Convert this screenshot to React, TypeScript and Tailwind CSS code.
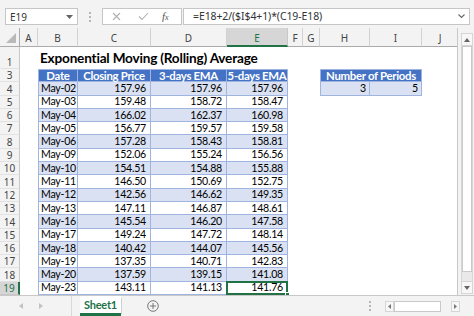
import React from 'react';

const data: [string, string, string, string][] = [
  ['May-02', '157.96', '157.96', '157.96'],
  ['May-03', '159.48', '158.72', '158.47'],
  ['May-04', '166.02', '162.37', '160.98'],
  ['May-05', '156.77', '159.57', '159.58'],
  ['May-06', '157.28', '158.43', '158.81'],
  ['May-09', '152.06', '155.24', '156.56'],
  ['May-10', '154.51', '154.88', '155.88'],
  ['May-11', '146.50', '150.69', '152.75'],
  ['May-12', '142.56', '146.62', '149.35'],
  ['May-13', '147.11', '146.87', '148.61'],
  ['May-16', '145.54', '146.20', '147.58'],
  ['May-17', '149.24', '147.72', '148.14'],
  ['May-18', '140.42', '144.07', '145.56'],
  ['May-19', '137.35', '140.71', '142.83'],
  ['May-20', '137.59', '139.15', '141.08'],
  ['May-23', '143.11', '141.13', '141.76'],
];

const letters = ['A', 'B', 'C', 'D', 'E', 'F', 'G', 'H', 'I', 'J'];

const rowHdr =
  "flex items-end justify-center pb-[1px] bg-[#f3f3f3] border-r border-[#c8c8c8] border-b border-b-[#e2e2e2] text-[10px] leading-none text-[#444] font-['Noto_Sans',sans-serif]";
const rowHdrSel =
  "flex items-end justify-center pb-[1px] bg-[#d6d6d6] border-r-2 border-[#217346] border-b border-b-[#c8c8c8] text-[10px] leading-none text-[#217346] font-['Noto_Sans',sans-serif]";
const tcell = 'border-r border-b border-[#9fb5df] flex items-end leading-none pb-[1px] whitespace-nowrap';
const hcell = 'border-r border-b border-t border-[#9fb5df] flex items-center justify-center whitespace-nowrap bg-[#4472c4] text-white font-bold text-[11.4px] leading-[12px] tracking-[-0.3px]';
const numText = 'text-[10.6px] tracking-[-0.25px]';

function Empty() {
  return <div />;
}

export default function App() {
  return (
    <div className="w-[474px] h-[316px] overflow-hidden bg-[#f3f3f3] flex flex-col font-['Lato',sans-serif] text-black">
      {/* formula bar */}
      <div className="h-[28px] shrink-0 flex items-start pt-[8px] pl-[5px] pr-[4px]">
        <div className="w-[73px] h-[17px] bg-white border border-[#c6c6c6] flex items-center justify-between pl-[4px] pr-[4px]">
          <span className="text-[10px] text-[#333] font-['Noto_Sans',sans-serif] leading-none">E19</span>
          <svg width="7" height="4" viewBox="0 0 7 4">
            <path d="M0 0 L7 0 L3.5 4 Z" fill="#666" />
          </svg>
        </div>
        <div className="w-[24px] h-[17px] flex flex-col items-center justify-center gap-[2px]">
          <div className="w-[2px] h-[2px] bg-[#b5b5b5]" />
          <div className="w-[2px] h-[2px] bg-[#b5b5b5]" />
          <div className="w-[2px] h-[2px] bg-[#b5b5b5]" />
        </div>
        <div className="w-[80px] h-[17px] bg-white border border-[#c6c6c6] flex items-center">
          <svg className="ml-[9px]" width="9" height="9" viewBox="0 0 9 9">
            <path d="M1 1 L8 8 M8 1 L1 8" stroke="#b0b0b0" strokeWidth="1.1" />
          </svg>
          <svg className="ml-[17px]" width="11" height="9" viewBox="0 0 11 9">
            <path d="M1 4.5 L4 7.5 L10 1" stroke="#b0b0b0" strokeWidth="1.1" fill="none" />
          </svg>
          <span className="ml-[13px] text-[11px] italic text-[#555] font-['Liberation_Serif',serif] leading-none">
            f<span className="text-[8px]">x</span>
          </span>
        </div>
        <div className="ml-[1px] flex-1 h-[17px] bg-white border border-[#c6c6c6] flex items-center justify-between pl-[9px] pr-[4px]">
          <span className="text-[10.5px] text-[#333] font-['Noto_Sans',sans-serif] leading-none tracking-[-0.1px]">
            =E18+2/($I$4+1)*(C19-E18)
          </span>
          <svg width="7" height="5" viewBox="0 0 7 5">
            <path d="M0.5 0.5 L3.5 3.5 L6.5 0.5" stroke="#666" strokeWidth="1.1" fill="none" />
          </svg>
        </div>
      </div>

      {/* sheet area */}
      <div className="flex h-[267px] shrink-0">
        <div className="w-[458px] bg-white border-r border-[#c8c8c8] grid grid-cols-[20px_18px_40px_73px_76px_61px_15px_17px_50px_52px_37px] grid-rows-[19px_22px_repeat(17,13.3px)] overflow-hidden">
          {/* header row */}
          <div className="bg-[#f3f3f3] border-r border-b border-[#ababab] relative">
            <svg className="absolute right-[3px] bottom-[3px]" width="10" height="10" viewBox="0 0 10 10">
              <path d="M10 0 L10 10 L0 10 Z" fill="#b9b9b9" />
            </svg>
          </div>
          {letters.map((l) =>
            l === 'E' ? (
              <div
                key={l}
                className="bg-[#d6d6d6] border-r border-[#c8c8c8] border-b-2 border-b-[#217346] flex items-end justify-center pb-[2px] text-[10px] leading-none text-[#217346] font-['Noto_Sans',sans-serif]"
              >
                {l}
              </div>
            ) : (
              <div
                key={l}
                className="bg-[#f3f3f3] border-r border-[#d2d2d2] border-b border-b-[#ababab] flex items-end justify-center pb-[3px] text-[10px] leading-none text-[#444] font-['Noto_Sans',sans-serif]"
              >
                {l}
              </div>
            )
          )}

          {/* row 1 */}
          <div className={rowHdr}>1</div>
          <Empty />
          <div className="col-span-9 flex items-end pl-[2px] pb-[3px] text-[13.6px] font-bold leading-none whitespace-nowrap tracking-[-0.2px]">
            Exponential Moving (Rolling) Average
          </div>

          {/* row 3 */}
          <div className={rowHdr}>3</div>
          <Empty />
          {['Date', 'Closing Price', '3-days EMA', '5-days EMA'].map((h, i) => (
            <div key={h} className={`${hcell} ${i === 0 ? 'border-l' : ''}`}>
              {h}
            </div>
          ))}
          <Empty />
          <Empty />
          <div className={`${hcell} border-l col-span-2`}>Number of Periods</div>
          <Empty />

          {data.map((r, idx) => {
            const rowNum = idx + 4;
            const band = idx % 2 === 0 ? 'bg-[#d9e1f2]' : 'bg-white';
            const last = rowNum === 19;
            return (
              <React.Fragment key={rowNum}>
                <div className={last ? rowHdrSel : rowHdr}>{rowNum}</div>
                <Empty />
                <div className={`${tcell} ${band} border-l pl-[2px] ${numText}`}>{r[0]}</div>
                <div className={`${tcell} ${band} justify-end pr-[4px] ${numText}`}>{r[1]}</div>
                <div className={`${tcell} ${band} justify-end pr-[4px] ${numText}`}>{r[2]}</div>
                {last ? (
                  <div className={`${tcell} ${band} justify-end pr-[4px] ${numText} relative`}>
                    {r[3]}
                    <div className="absolute -left-[1px] -top-[1px] -right-[1px] -bottom-[1px] border-2 border-[#217346]" />
                    <div className="absolute -right-[3px] -bottom-[3px] w-[5px] h-[5px] bg-[#217346] border border-white" />
                  </div>
                ) : (
                  <div className={`${tcell} ${band} justify-end pr-[4px] ${numText}`}>{r[3]}</div>
                )}
                <Empty />
                <Empty />
                {rowNum === 4 ? (
                  <>
                    <div className={`${tcell} border-l bg-[#d9e1f2] justify-end pr-[3px] ${numText}`}>3</div>
                    <div className={`${tcell} bg-[#d9e1f2] justify-end pr-[3px] ${numText}`}>5</div>
                  </>
                ) : (
                  <>
                    <Empty />
                    <Empty />
                  </>
                )}
                <Empty />
              </React.Fragment>
            );
          })}
        </div>

        {/* vertical scrollbar */}
        <div className="flex-1 flex flex-col pl-[3px] pr-[1px] pt-[5px] pb-[1px]">
          <div className="h-[13px] flex items-center justify-center border border-[#d6d6d6] bg-[#f7f7f7]">
            <svg width="6" height="4" viewBox="0 0 6 4">
              <path d="M0 4 L3 0 L6 4 Z" fill="#666" />
            </svg>
          </div>
          <div className="flex-1 bg-[#e9e9e9] border-x border-[#d6d6d6] flex flex-col">
            <div className="h-[226px] bg-white border border-[#c9c9c9]" />
          </div>
          <div className="h-[13px] flex items-center justify-center border border-[#d6d6d6] bg-[#f7f7f7]">
            <svg width="6" height="4" viewBox="0 0 6 4">
              <path d="M0 0 L6 0 L3 4 Z" fill="#666" />
            </svg>
          </div>
        </div>
      </div>

      {/* tab bar */}
      <div className="flex-1 border-t border-[#c8c8c8] flex items-stretch relative">
        <div className="w-[72px] flex items-center pl-[19px] gap-[16px] border-r border-[#d8d8d8]">
          <svg width="4" height="6" viewBox="0 0 4 6">
            <path d="M4 0 L4 6 L0 3 Z" fill="#c2c2c2" />
          </svg>
          <svg width="4" height="6" viewBox="0 0 4 6">
            <path d="M0 0 L0 6 L4 3 Z" fill="#c2c2c2" />
          </svg>
        </div>
        <div className="ml-[8px] w-[41px] bg-white border-b-[3px] border-[#217346] flex items-center justify-center text-[11px] font-bold text-[#217346] leading-none tracking-[-0.2px]">
          Sheet1
        </div>
        <div className="w-[1px] bg-[#d0d0d0] my-[2px]" />
        <div className="ml-[25px] flex items-center">
          <svg width="12" height="12" viewBox="0 0 12 12">
            <circle cx="6" cy="6" r="5.3" stroke="#777" strokeWidth="1" fill="none" />
            <path d="M6 3 L6 9 M3 6 L9 6" stroke="#777" strokeWidth="1" />
          </svg>
        </div>
        <div className="flex-1" />
        <div className="flex items-center gap-[2px] mr-[14px]">
          <div className="flex flex-col gap-[2px] mr-[12px]">
            <div className="w-[2px] h-[2px] bg-[#b5b5b5]" />
            <div className="w-[2px] h-[2px] bg-[#b5b5b5]" />
            <div className="w-[2px] h-[2px] bg-[#b5b5b5]" />
          </div>
          <div className="w-[9px] h-[11px] border border-[#d6d6d6] bg-[#f7f7f7] flex items-center justify-center">
            <svg width="3" height="5" viewBox="0 0 3 5">
              <path d="M3 0 L3 5 L0 2.5 Z" fill="#777" />
            </svg>
          </div>
          <div className="w-[47px] h-[11px] bg-white border border-[#c9c9c9] -ml-[2px]" />
          <div className="w-[6px]" />
          <div className="w-[9px] h-[11px] border border-[#d6d6d6] bg-[#f7f7f7] flex items-center justify-center">
            <svg width="3" height="5" viewBox="0 0 3 5">
              <path d="M0 0 L0 5 L3 2.5 Z" fill="#777" />
            </svg>
          </div>
        </div>
      </div>
    </div>
  );
}
